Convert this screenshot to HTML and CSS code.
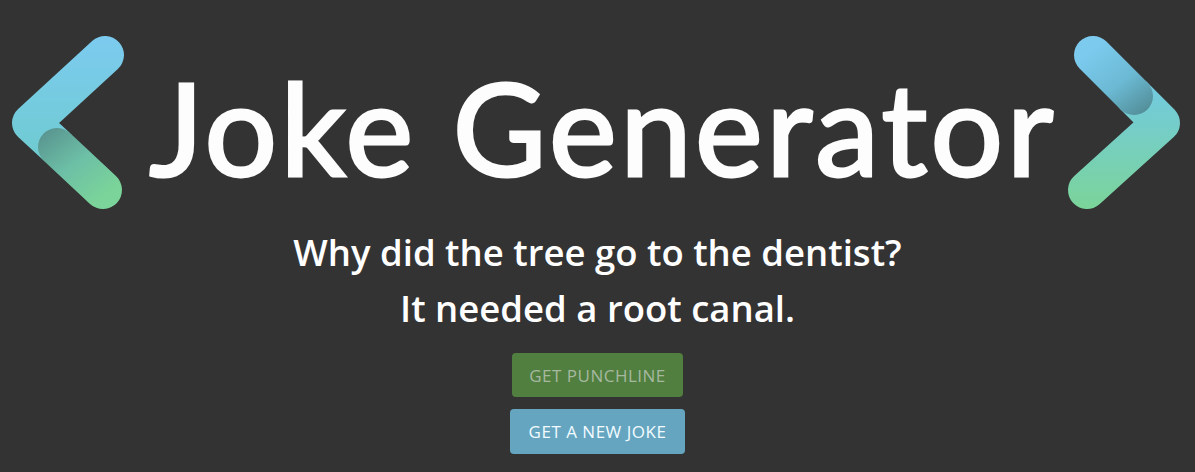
FILE: index.html
```html
<!DOCTYPE html>
<html lang="en">
<head>
<meta charset="utf-8">
<title>Joke Generator</title>
<link rel="stylesheet" href="styles.css">
</head>
<body>
<header class="brand">
  <svg class="chev chev-left" width="130" height="190" viewBox="0 0 130 190" aria-hidden="true">
    <defs>
      <linearGradient id="lt" x1="0" y1="10" x2="0" y2="135" gradientUnits="userSpaceOnUse">
        <stop offset="0" stop-color="#7ccbef"/>
        <stop offset="1" stop-color="#6ecbcf"/>
      </linearGradient>
      <linearGradient id="lb" x1="50" y1="100" x2="103" y2="170" gradientUnits="userSpaceOnUse">
        <stop offset="0" stop-color="#5a9691"/>
        <stop offset="0.5" stop-color="#6dc0a6"/>
        <stop offset="1" stop-color="#7bd499"/>
      </linearGradient>
    </defs>
    <polyline points="105,27 31,95 56,118" fill="none" stroke="url(#lt)" stroke-width="38" stroke-linecap="round" stroke-linejoin="round"/>
    <line x1="57" y1="119" x2="103" y2="162" stroke="url(#lb)" stroke-width="38" stroke-linecap="round"/>
  </svg>
  <h1 class="title">Joke Generator</h1>
  <svg class="chev chev-right" width="135" height="190" viewBox="0 0 135 190" aria-hidden="true">
    <defs>
      <linearGradient id="rb" x1="0" y1="60" x2="0" y2="180" gradientUnits="userSpaceOnUse">
        <stop offset="0" stop-color="#72cadf"/>
        <stop offset="1" stop-color="#7bd499"/>
      </linearGradient>
      <linearGradient id="rt" x1="33" y1="20" x2="82" y2="85" gradientUnits="userSpaceOnUse">
        <stop offset="0" stop-color="#7ccbef"/>
        <stop offset="0.55" stop-color="#6bb9d3"/>
        <stop offset="1" stop-color="#54909b"/>
      </linearGradient>
    </defs>
    <polyline points="27,162 101,95 74,68" fill="none" stroke="url(#rb)" stroke-width="38" stroke-linecap="round" stroke-linejoin="round"/>
    <line x1="33" y1="27" x2="74" y2="68" stroke="url(#rt)" stroke-width="38" stroke-linecap="round"/>
  </svg>
</header>
<main class="joke">
  <p class="joke-line">Why did the tree go to the dentist?</p>
  <p class="joke-line">It needed a root canal.</p>
  <div class="actions">
    <button class="btn btn-punch" type="button">GET PUNCHLINE</button>
    <button class="btn btn-new" type="button">GET A NEW JOKE</button>
  </div>
</main>
</body>
</html>
```
FILE: styles.css
```css
html, body {
  margin: 0;
  padding: 0;
}
body {
  background: #333333;
  color: #ffffff;
  font-family: "Open Sans", "Noto Sans", sans-serif;
  width: 1195px;
  height: 472px;
  overflow: hidden;
}
.brand {
  display: grid;
  grid-template-columns: 130px 1fr 135px;
  align-items: center;
  padding-top: 28px;
  height: 190px;
}
.chev {
  display: block;
}
.title {
  margin: 0;
  padding-top: 8px;
  padding-left: 16px;
  text-align: center;
  font-family: "Lato", sans-serif;
  font-weight: 400;
  font-size: 128px;
  line-height: 1;
  letter-spacing: 3.5px;
  color: #fdfdfd;
  -webkit-text-stroke: 3px #fdfdfd;
}
.joke {
  display: flex;
  flex-direction: column;
  align-items: center;
  padding-top: 6px;
}
.joke-line {
  margin: 0;
  font-weight: 600;
  font-size: 36.5px;
  line-height: 56px;
  color: #ffffff;
}
.actions {
  display: flex;
  flex-direction: column;
  align-items: center;
  gap: 12px;
  margin-top: 17px;
}
.btn {
  border: 0;
  border-radius: 4px;
  font-family: "Open Sans", "Noto Sans", sans-serif;
  font-size: 17px;
  letter-spacing: 0.5px;
  height: 44px;
  padding: 0 17px;
}
.btn-punch {
  background: #517f3f;
  color: #a6b8a0;
}
.btn-new {
  background: #65a5c0;
  color: #f2fbff;
  height: 45px;
  padding: 0 19px;
}
```
